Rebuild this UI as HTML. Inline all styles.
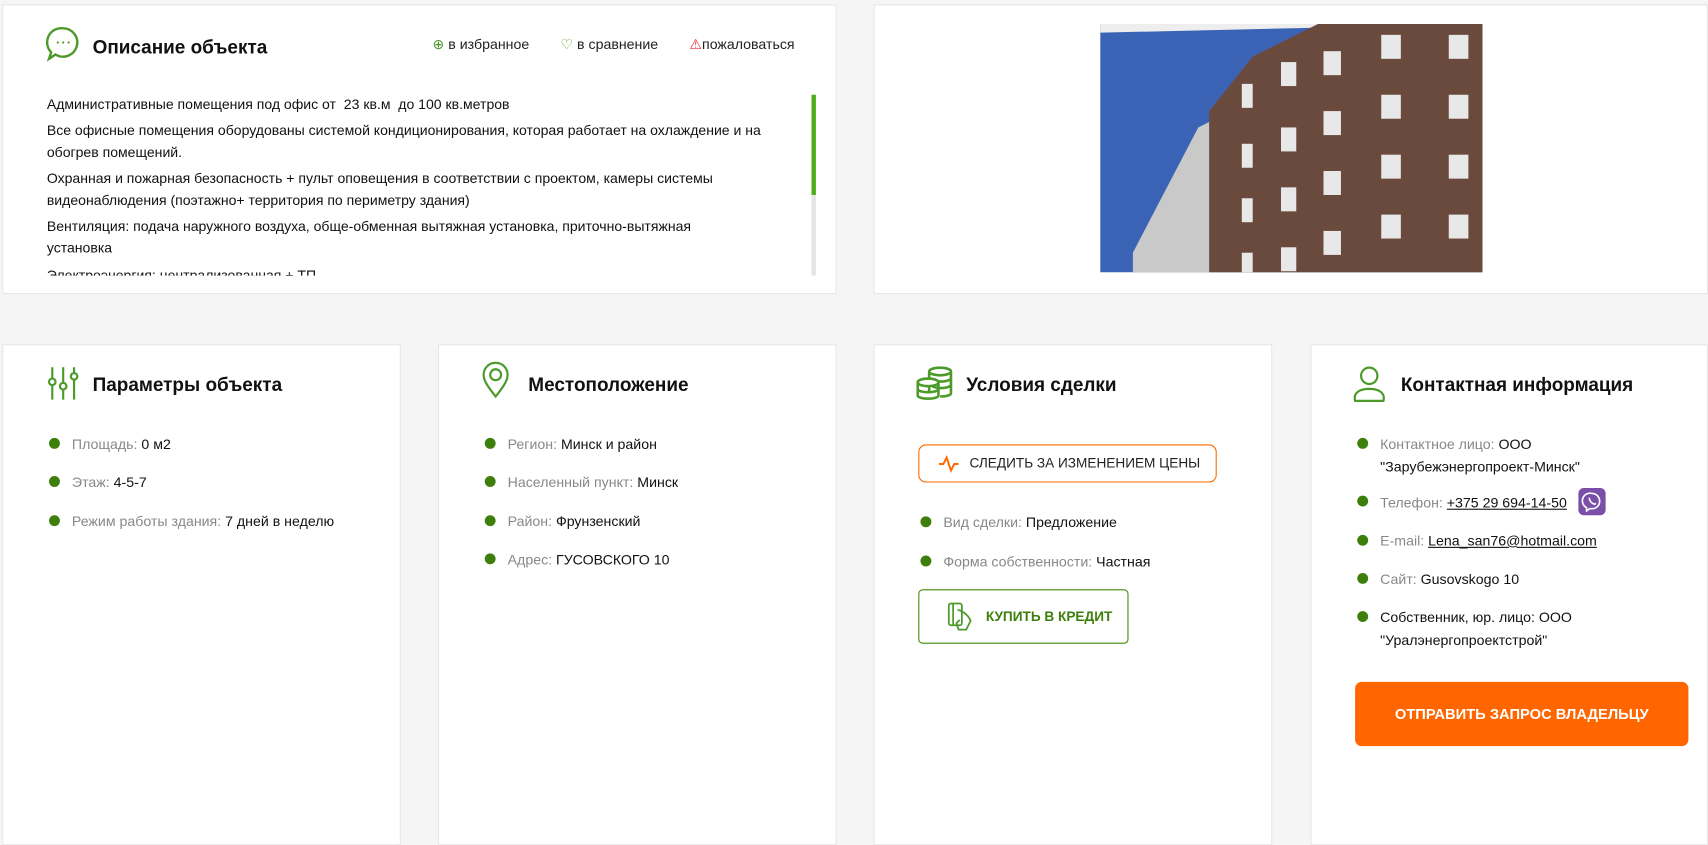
<!DOCTYPE html>
<html><head><meta charset="utf-8"><style>
*{box-sizing:border-box;margin:0;padding:0}
body{width:1708px;height:764px;background:#f5f5f5;font-family:"Liberation Sans",Arial,sans-serif;color:#111;overflow:hidden}
#w{position:relative;width:1569px;height:702px;transform:scale(1.0893);transform-origin:0 0}
.card{position:absolute;background:#fff;border:1px solid #e6e6e6}
.h{position:absolute;font-size:17.4px;font-weight:bold;color:#111}
.ic{position:absolute}
.li{position:absolute;font-size:13px;line-height:21px;padding-left:21px}
.li:before{content:"";position:absolute;left:0;top:5px;width:10px;height:10px;border-radius:50%;background:#3d7f0a}
.g{color:#888}
a{color:#111;text-decoration:underline}
.desc p{font-size:12.9px;line-height:19.8px;margin-bottom:4.5px}
</style></head><body><div id="w">

<div class="card" style="left:2px;top:4px;width:766px;height:266px;overflow:hidden">
  <svg class="ic" style="left:39px;top:18px" width="32" height="36" viewBox="0 0 32 36"><path d="M16 3a13 13 0 1 1-7 24l-6 4 2-6A13 13 0 0 1 16 3z" fill="none" stroke="#4c9a2a" stroke-width="2.2"/><circle cx="11" cy="16" r="1" fill="#4c9a2a"/><circle cx="16" cy="16" r="1" fill="#4c9a2a"/><circle cx="21" cy="16" r="1" fill="#4c9a2a"/></svg>
  <div class="h" style="left:82px;top:28px">Описание объекта</div>
  <div style="position:absolute;left:394px;top:28px;font-size:13px;color:#222;white-space:nowrap">
    <span style="color:#4c9a2a">⊕</span> в избранное
    <span style="margin-left:25px;color:#4c9a2a">♡</span> в сравнение
    <span style="margin-left:25px;color:#e03030">⚠</span>пожаловаться
  </div>
  <div class="desc" style="position:absolute;left:40px;top:81px;width:692px;height:167px;overflow:hidden">
    <p>Административные помещения под офис от&nbsp; 23 кв.м&nbsp; до 100 кв.метров</p>
    <p>Все офисные помещения оборудованы системой кондиционирования, которая работает на охлаждение и на обогрев помещений.</p>
    <p>Охранная и пожарная безопасность + пульт оповещения в соответствии с проектом, камеры системы видеонаблюдения (поэтажно+ территория по периметру здания)</p>
    <p>Вентиляция: подача наружного воздуха, обще-обменная вытяжная установка, приточно-вытяжная<br>установка</p>
    <p>Электроэнергия: централизованная + ТП</p>
  </div>
  <div style="position:absolute;left:742px;top:82px;width:4px;height:166px;background:#e4e4e4"></div>
  <div style="position:absolute;left:742px;top:82px;width:4px;height:92px;background:#4caf1a"></div>
</div>

<div class="card" style="left:802px;top:4px;width:766px;height:266px">
  <svg style="position:absolute;left:207px;top:17px" width="351" height="228" viewBox="0 0 351 228">
    <rect width="351" height="228" fill="#3b63b5"/>
    <polygon points="0,0 351,0 351,0 0,8" fill="#eee"/>
    <polygon points="100,228 100,80 140,30 200,0 351,0 351,228" fill="#6b4a3e"/>
    <polygon points="30,228 30,210 90,95 100,90 100,228" fill="#c8c9c8"/>
    <g fill="#e8e8e8">
      <rect x="130" y="55" width="10" height="22"/><rect x="130" y="110" width="10" height="22"/><rect x="130" y="160" width="10" height="22"/><rect x="130" y="210" width="10" height="18"/>
      <rect x="166" y="35" width="14" height="22"/><rect x="166" y="95" width="14" height="22"/><rect x="166" y="150" width="14" height="22"/><rect x="166" y="205" width="14" height="22"/>
      <rect x="205" y="25" width="16" height="22"/><rect x="205" y="80" width="16" height="22"/><rect x="205" y="135" width="16" height="22"/><rect x="205" y="190" width="16" height="22"/>
      <rect x="258" y="10" width="18" height="22"/><rect x="258" y="65" width="18" height="22"/><rect x="258" y="120" width="18" height="22"/><rect x="258" y="175" width="18" height="22"/>
      <rect x="320" y="10" width="18" height="22"/><rect x="320" y="65" width="18" height="22"/><rect x="320" y="120" width="18" height="22"/><rect x="320" y="175" width="18" height="22"/>
    </g>
  </svg>
</div>

<div class="card" style="left:2px;top:316px;width:366px;height:460px">
  <svg class="ic" style="left:40px;top:20px" width="32" height="30" viewBox="0 0 32 30" fill="none" stroke="#4c9a2a" stroke-width="2"><path d="M5 0v10M5 17v13M15 0v14M15 21v9M25 0v5M25 12v18"/><circle cx="5" cy="13.5" r="3"/><circle cx="15" cy="17.5" r="3"/><circle cx="25" cy="8.5" r="3"/></svg>
  <div class="h" style="left:82px;top:26px">Параметры объекта</div>
  <div class="li" style="left:42px;top:80px"><span class="g">Площадь:</span> 0 м2</div>
  <div class="li" style="left:42px;top:115px"><span class="g">Этаж:</span> 4-5-7</div>
  <div class="li" style="left:42px;top:151px"><span class="g">Режим работы здания:</span> 7 дней в неделю</div>
</div>

<div class="card" style="left:402px;top:316px;width:366px;height:460px">
  <svg class="ic" style="left:38px;top:15px" width="28" height="34" viewBox="0 0 28 34" fill="none" stroke="#4c9a2a" stroke-width="2"><path d="M14 32C6 22 3 17 3 12a11 11 0 0 1 22 0c0 5-3 10-11 20z"/><circle cx="14" cy="12" r="5"/></svg>
  <div class="h" style="left:82px;top:26px">Местоположение</div>
  <div class="li" style="left:42px;top:80px"><span class="g">Регион:</span> Минск и район</div>
  <div class="li" style="left:42px;top:115px"><span class="g">Населенный пункт:</span> Минск</div>
  <div class="li" style="left:42px;top:151px"><span class="g">Район:</span> Фрунзенский</div>
  <div class="li" style="left:42px;top:186px"><span class="g">Адрес:</span> ГУСОВСКОГО 10</div>
</div>

<div class="card" style="left:802px;top:316px;width:366px;height:460px">
  <svg class="ic" style="left:38px;top:19px" width="34" height="32" viewBox="0 0 34 32" fill="none" stroke="#4c9a2a" stroke-width="2.4"><ellipse cx="22" cy="5" rx="10" ry="3.5"/><path d="M12 5v20M32 5v20M14 12c5 3 13 3 18 0M14 18c5 3 13 3 18 0M22 28c5 0 10-1 10-3"/><ellipse cx="11" cy="15" rx="9.5" ry="3.5" fill="#fff"/><path d="M1.5 15v12c0 4 19 4 19 0V15M1.5 21c0 4 19 4 19 0"/></svg>
  <div class="h" style="left:84px;top:26px">Условия сделки</div>
  <div style="position:absolute;left:40px;top:91px;width:274px;height:35px;border:1px solid #ff6a00;border-radius:7px;font-size:12.5px;line-height:33px;padding-left:46px;color:#222">СЛЕДИТЬ ЗА ИЗМЕНЕНИЕМ ЦЕНЫ
    <svg style="position:absolute;left:18px;top:9px" width="18" height="16" viewBox="0 0 18 16" fill="none" stroke="#ff6a00" stroke-width="1.8"><path d="M0 8h4l3-6 4 12 3-6h4"/></svg></div>
  <div class="li" style="left:42px;top:152px"><span class="g">Вид сделки:</span> Предложение</div>
  <div class="li" style="left:42px;top:188px"><span class="g">Форма собственности:</span> Частная</div>
  <div style="position:absolute;left:40px;top:224px;width:193px;height:50px;border:1px solid #3d8a0a;border-radius:4px;font-size:12.5px;font-weight:bold;color:#3d7f0a;line-height:48px;padding-left:61px">КУПИТЬ В КРЕДИТ
    <svg style="position:absolute;left:25px;top:10px" width="26" height="28" viewBox="0 0 26 28" fill="none" stroke="#4c9a2a" stroke-width="1.6"><rect x="2" y="2" width="12" height="20" rx="2"/><path d="M6 2v20M10 8c3 0 10 4 12 10l-4 8h-7l-2-6 3-3"/></svg></div>
</div>

<div class="card" style="left:1203px;top:316px;width:365px;height:460px">
  <svg class="ic" style="left:38px;top:19px" width="32" height="34" viewBox="0 0 32 34" fill="none" stroke="#4c9a2a" stroke-width="2"><circle cx="15" cy="9" r="7.5"/><path d="M2 32c-2-8 5-11 13-11s15 3 13 11z"/></svg>
  <div class="h" style="left:82px;top:26px">Контактная информация</div>
  <div class="li" style="left:42px;top:80px;width:300px"><span class="g">Контактное лицо:</span> ООО "Зарубежэнергопроект-Минск"</div>
  <div class="li" style="left:42px;top:133px"><span class="g">Телефон:</span> <a>+375 29 694-14-50</a>
    <span style="display:inline-block;vertical-align:middle;margin-left:7px;width:25px;height:25px;border-radius:5px;background:#7b4fa8;position:relative;top:-2px"><svg width="25" height="25" viewBox="0 0 25 25" fill="none" stroke="#fff" stroke-width="1.5"><path d="M12.5 5a7 7 0 0 1 7 7c0 4-3 7-7 7h-2l-3 2v-3a7 7 0 0 1 5-13z"/><path d="M10 9c0 3 2 5 5 6l1-1"/></svg></span></div>
  <div class="li" style="left:42px;top:169px"><span class="g">E-mail:</span> <a>Lena_san76@hotmail.com</a></div>
  <div class="li" style="left:42px;top:204px"><span class="g">Сайт:</span> Gusovskogo 10</div>
  <div class="li" style="left:42px;top:239px;width:300px">Собственник, юр. лицо: ООО "Уралэнергопроектстрой"</div>
  <div style="position:absolute;left:40px;top:309px;width:306px;height:59px;background:#ff6600;border-radius:6px;color:#fff;font-weight:bold;font-size:13.5px;text-align:center;line-height:59px">ОТПРАВИТЬ ЗАПРОС ВЛАДЕЛЬЦУ</div>
</div>
</div></body></html>
